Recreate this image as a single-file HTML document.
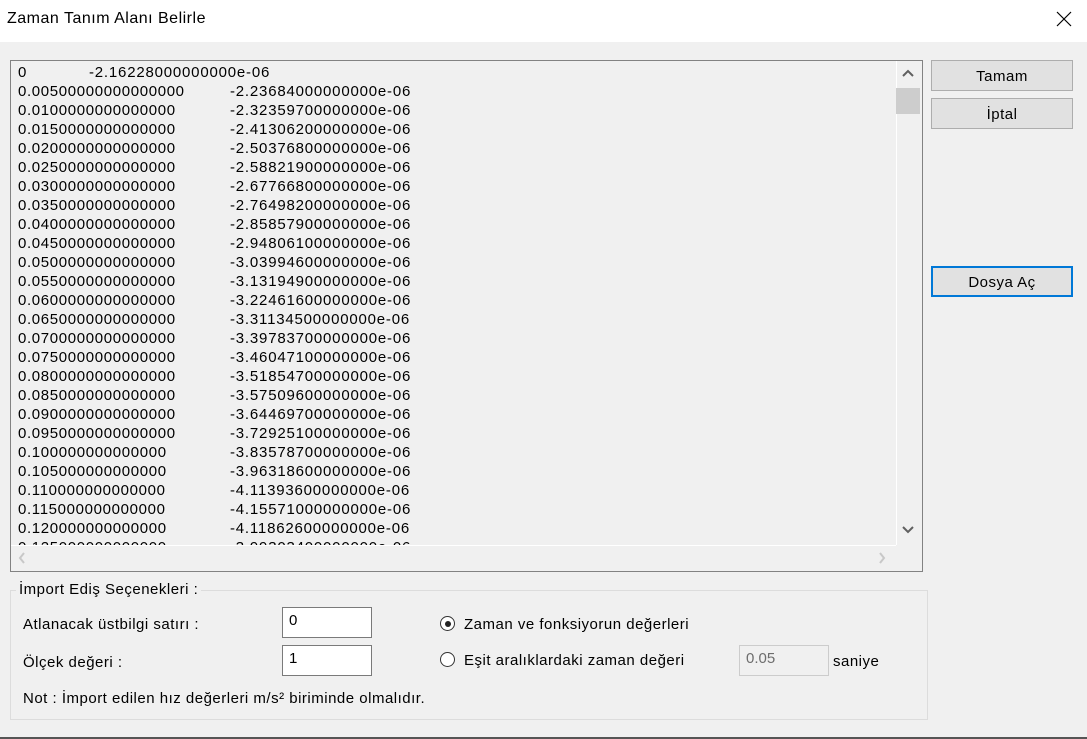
<!DOCTYPE html>
<html><head><meta charset="utf-8"><style>
*{margin:0;padding:0;box-sizing:border-box}
body{width:1087px;height:739px;background:#f0f0f0;font-family:"Liberation Sans",sans-serif;font-size:15px;color:#000;position:relative;overflow:hidden}
.a{position:absolute;white-space:nowrap}
.title{position:absolute;left:0;top:0;width:1087px;height:42px;background:#fff}
.list{position:absolute;left:10px;top:60px;width:913px;height:512px;border:1px solid #828282;background:#f0f0f0;overflow:hidden}
.row{position:absolute;left:7px;height:19px;line-height:19px;letter-spacing:0.65px;white-space:nowrap}
.row span{position:absolute;left:212px;letter-spacing:0.8px}
.btn{position:absolute;background:#e1e1e1;border:1px solid #adadad;text-align:center;line-height:31px;letter-spacing:.5px}
.inp{position:absolute;background:#fff;border:1px solid #7a7a7a;padding:3px 6px;line-height:20px}
.rad{position:absolute;width:15px;height:15px;border:1px solid #333;border-radius:50%;background:#fff}
.lbl{letter-spacing:.5px}
</style></head><body>
<div class="title"></div>
<div class="a lbl" style="left:7px;top:10px;font-size:16px">Zaman Tanım Alanı Belirle</div>
<svg class="a" style="left:1056px;top:11px" width="16" height="16"><path d="M1 1L15 15M15 1L1 15" stroke="#000" stroke-width="1.2"/></svg>
<div class="list">
<div class="row" style="top:2px">0<span style="left:71px">-2.16228000000000e-06</span></div>
<div class="row" style="top:21px">0.00500000000000000<span>-2.23684000000000e-06</span></div>
<div class="row" style="top:40px">0.0100000000000000<span>-2.32359700000000e-06</span></div>
<div class="row" style="top:59px">0.0150000000000000<span>-2.41306200000000e-06</span></div>
<div class="row" style="top:78px">0.0200000000000000<span>-2.50376800000000e-06</span></div>
<div class="row" style="top:97px">0.0250000000000000<span>-2.58821900000000e-06</span></div>
<div class="row" style="top:116px">0.0300000000000000<span>-2.67766800000000e-06</span></div>
<div class="row" style="top:135px">0.0350000000000000<span>-2.76498200000000e-06</span></div>
<div class="row" style="top:154px">0.0400000000000000<span>-2.85857900000000e-06</span></div>
<div class="row" style="top:173px">0.0450000000000000<span>-2.94806100000000e-06</span></div>
<div class="row" style="top:192px">0.0500000000000000<span>-3.03994600000000e-06</span></div>
<div class="row" style="top:211px">0.0550000000000000<span>-3.13194900000000e-06</span></div>
<div class="row" style="top:230px">0.0600000000000000<span>-3.22461600000000e-06</span></div>
<div class="row" style="top:249px">0.0650000000000000<span>-3.31134500000000e-06</span></div>
<div class="row" style="top:268px">0.0700000000000000<span>-3.39783700000000e-06</span></div>
<div class="row" style="top:287px">0.0750000000000000<span>-3.46047100000000e-06</span></div>
<div class="row" style="top:306px">0.0800000000000000<span>-3.51854700000000e-06</span></div>
<div class="row" style="top:325px">0.0850000000000000<span>-3.57509600000000e-06</span></div>
<div class="row" style="top:344px">0.0900000000000000<span>-3.64469700000000e-06</span></div>
<div class="row" style="top:363px">0.0950000000000000<span>-3.72925100000000e-06</span></div>
<div class="row" style="top:382px">0.100000000000000<span>-3.83578700000000e-06</span></div>
<div class="row" style="top:401px">0.105000000000000<span>-3.96318600000000e-06</span></div>
<div class="row" style="top:420px">0.110000000000000<span>-4.11393600000000e-06</span></div>
<div class="row" style="top:439px">0.115000000000000<span>-4.15571000000000e-06</span></div>
<div class="row" style="top:458px">0.120000000000000<span>-4.11862600000000e-06</span></div>
<div class="row" style="top:477px">0.125000000000000<span>-3.99303400000000e-06</span></div>
<div class="a" style="left:0;top:484px;width:885px;height:27px;background:#f0f0f0;border-top:1px solid #fff"></div>
<div class="a" style="left:885px;top:0;width:26px;height:484px;background:#f0f0f0;border-left:1px solid #fff"></div>
<div class="a" style="left:885px;top:27px;width:24px;height:26px;background:#cdcdcd"></div>
<svg class="a" style="left:890px;top:7px" width="14" height="10"><path d="M2 8L7 3L12 8" stroke="#606060" stroke-width="2" fill="none"/></svg>
<svg class="a" style="left:890px;top:464px" width="14" height="10"><path d="M2 2L7 7L12 2" stroke="#606060" stroke-width="2" fill="none"/></svg>
<svg class="a" style="left:6px;top:490px" width="10" height="14"><path d="M7 2L3 7L7 12" stroke="#c8c8c8" stroke-width="2" fill="none"/></svg>
<svg class="a" style="left:866px;top:490px" width="10" height="14"><path d="M3 2L7 7L3 12" stroke="#c8c8c8" stroke-width="2" fill="none"/></svg>
</div>
<div class="btn" style="left:931px;top:60px;width:142px;height:31px">Tamam</div>
<div class="btn" style="left:931px;top:98px;width:142px;height:31px">İptal</div>
<div class="btn" style="left:931px;top:266px;width:142px;height:31px;border:2px solid #0078d7;line-height:29px">Dosya Aç</div>
<div class="a" style="left:10px;top:590px;width:918px;height:130px;border:1px solid #dcdcdc"></div>
<div class="a lbl" style="left:16px;top:580px;background:#f0f0f0;padding:0 3px;line-height:20px">İmport Ediş Seçenekleri :</div>
<div class="a lbl" style="left:23px;top:616px">Atlanacak üstbilgi satırı :</div>
<div class="inp" style="left:282px;top:607px;width:90px;height:31px">0</div>
<div class="a lbl" style="left:23px;top:654px">Ölçek değeri :</div>
<div class="inp" style="left:282px;top:645px;width:90px;height:31px">1</div>
<div class="rad" style="left:440px;top:616px"></div>
<div class="a" style="left:444.5px;top:620.5px;width:6px;height:6px;border-radius:50%;background:#222"></div>
<div class="a lbl" style="left:464px;top:616px">Zaman ve fonksiyorun değerleri</div>
<div class="rad" style="left:440px;top:652px"></div>
<div class="a lbl" style="left:464px;top:652px">Eşit aralıklardaki zaman değeri</div>
<div class="inp" style="left:739px;top:645px;width:90px;height:31px;background:#f0f0f0;border-color:#ccc;color:#6d6d6d">0.05</div>
<div class="a lbl" style="left:833px;top:653px">saniye</div>
<div class="a lbl" style="left:23px;top:690px">Not : İmport edilen hız değerleri m/s² biriminde olmalıdır.</div>
<div class="a" style="left:0;top:737px;width:1087px;height:2px;background:#555"></div>
</body></html>
